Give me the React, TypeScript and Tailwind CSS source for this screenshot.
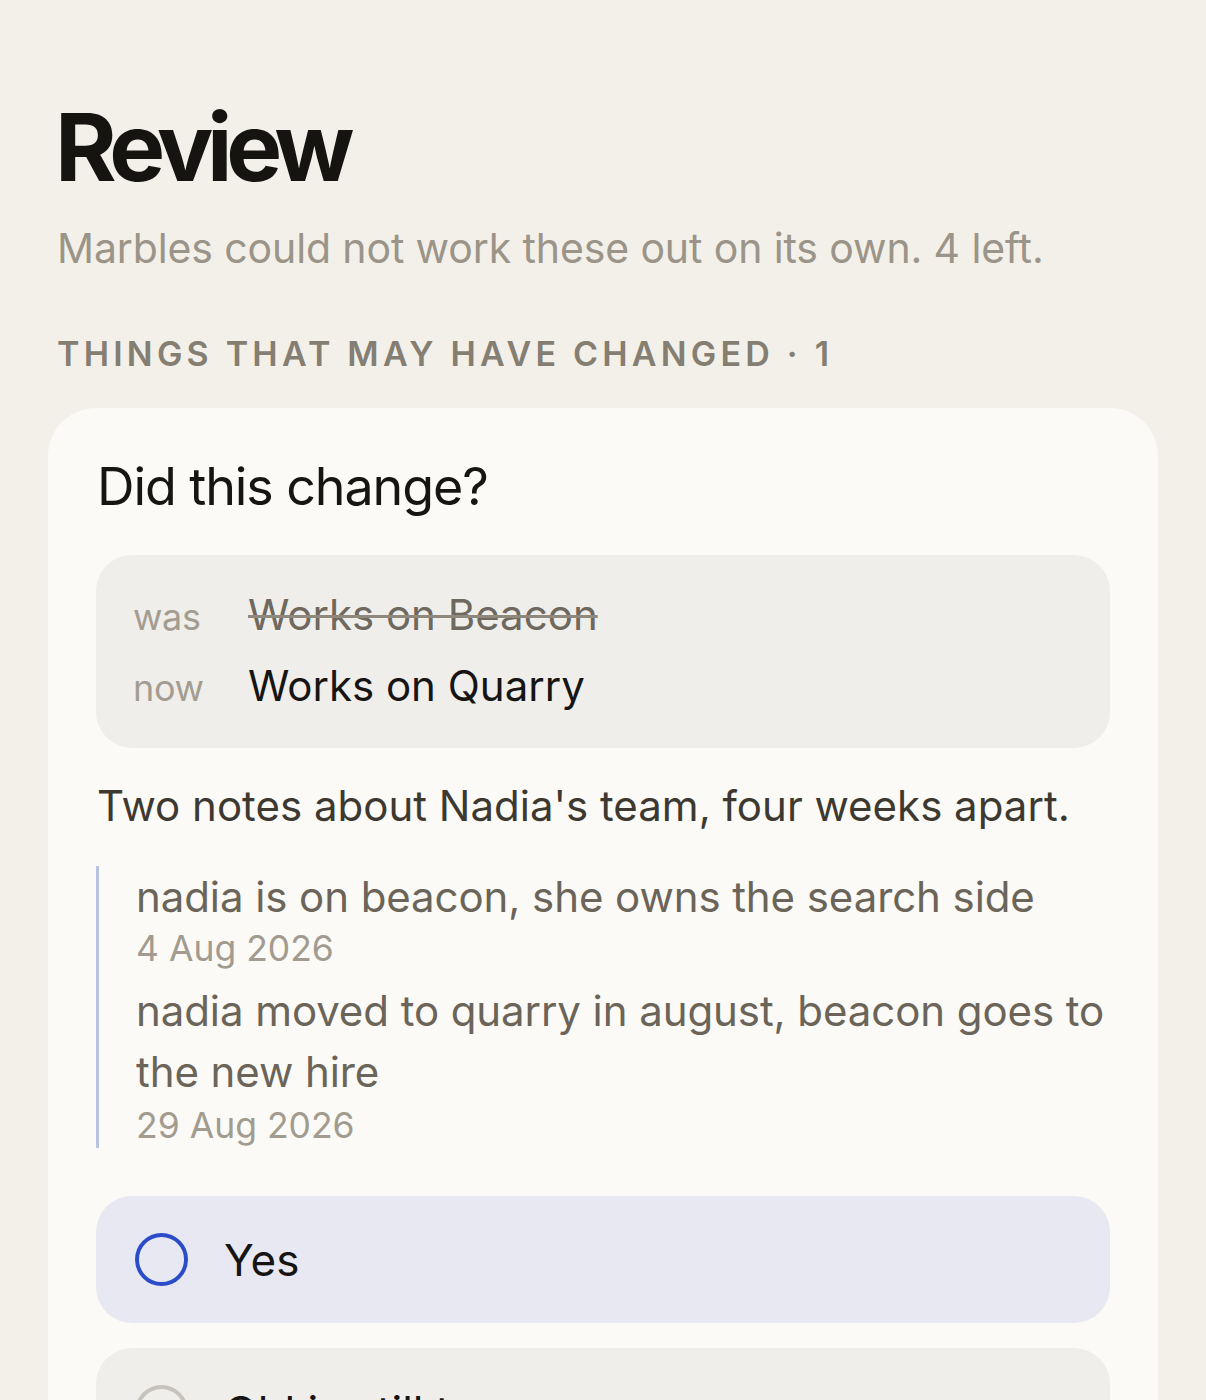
import React from "react";

function Radio({ active }: { active: boolean }) {
  return (
    <span
      className={
        active
          ? "block h-[53px] w-[53px] shrink-0 rounded-full border-[4px] border-[#2b4cc8]"
          : "block h-[53px] w-[53px] shrink-0 rounded-full border-[4px] border-[#c6c3bc]"
      }
    />
  );
}

export default function App() {
  return (
    <div
      className="min-h-[1400px] bg-[#f3f0e9] px-[48px] pt-[100px] text-[#161513]"
      style={{ fontFamily: "Inter, 'Noto Sans', sans-serif" }}
    >
      <h1 className="pl-[7px] text-[94px] font-bold leading-[94px] tracking-[-0.068em] text-[#161411]">
        Review
      </h1>
      <p className="mt-[28px] pl-[9px] text-[41px] leading-[52px] tracking-[-0.003em] text-[#9b9488]">
        Marbles could not work these out on its own. 4 left.
      </p>
      <div className="mt-[60px] pl-[9px] text-[34px] font-semibold leading-[40px] tracking-[0.124em] text-[#857e72]">
        THINGS THAT MAY HAVE CHANGED · 1
      </div>

      <div className="mt-[34px] rounded-[48px] bg-[#fbfaf6] px-[48px] pt-[48px] pb-[60px]">
        <h2 className="pl-[1px] text-[52px] leading-[62px] tracking-[-0.021em] text-[#161513]">
          Did this change?
        </h2>

        <div className="mt-[37px] rounded-[36px] bg-[#f0eeea] pl-[37px] pr-[37px] pt-[32px] pb-[34px]">
          <div className="flex items-baseline">
            <span className="w-[115px] shrink-0 text-[36px] leading-[50px] tracking-[-0.01em] text-[#a39d91]">
              was
            </span>
            <span className="text-[42px] leading-[56px] text-[#6e685e] line-through decoration-[#8f887c] decoration-[3px]">
              Works on Beacon
            </span>
          </div>
          <div className="mt-[15px] flex items-baseline">
            <span className="w-[115px] shrink-0 text-[36px] leading-[50px] tracking-[-0.01em] text-[#a39d91]">
              now
            </span>
            <span className="text-[42px] leading-[56px] text-[#161513]">Works on Quarry</span>
          </div>
        </div>

        <p className="mt-[30px] pl-[1px] text-[42px] leading-[56px] text-[#3d3931]">
          Two notes about Nadia's team, four weeks apart.
        </p>

        <div className="mt-[32px] border-l-[3px] border-[#b9c3df] pl-[37px]">
          <div>
            <p className="text-[42px] leading-[61px] tracking-[-0.002em] text-[#6b6459]">
              nadia is on beacon, she owns the search side
            </p>
            <p className="text-[35.5px] leading-[44px] text-[#a29b8f]">4 Aug 2026</p>
          </div>
          <div className="mt-[9px]">
            <p className="text-[42px] leading-[61px] tracking-[-0.002em] text-[#6b6459]">
              nadia moved to quarry in august, beacon goes to the new hire
            </p>
            <p className="mt-[2px] text-[35.5px] leading-[44px] text-[#a29b8f]">29 Aug 2026</p>
          </div>
        </div>

        <div className="mt-[48px] flex flex-col gap-[25px]">
          <div className="flex h-[127px] items-center gap-[36px] rounded-[36px] bg-[#e8e8f2] pl-[39px]">
            <Radio active />
            <span className="text-[44px] leading-[56px] text-[#161513]">Yes</span>
          </div>
          <div className="flex h-[127px] items-center gap-[36px] rounded-[36px] bg-[#f0eeea] pl-[39px]">
            <Radio active={false} />
            <span className="text-[44px] leading-[56px] text-[#161513]">Old is still true</span>
          </div>
        </div>
      </div>
    </div>
  );
}
